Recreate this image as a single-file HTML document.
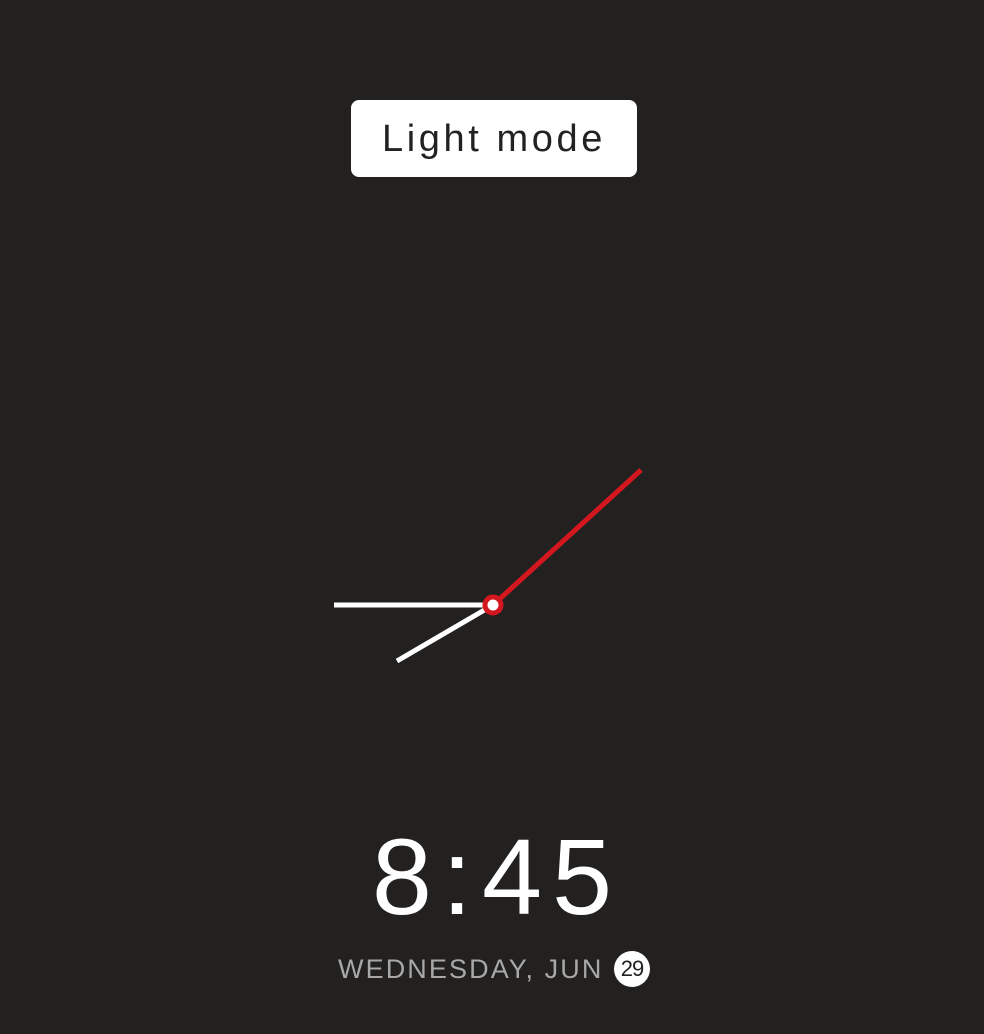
<!DOCTYPE html>
<html><head><style>
html,body{margin:0;padding:0;background:#222120;width:984px;height:1034px;overflow:hidden;font-family:"Liberation Sans",sans-serif}
.btn{position:absolute;left:351px;top:100px;width:286px;height:77px;background:#fff;border-radius:8px;color:#222;font-size:38px;letter-spacing:3.6px;text-align:center;line-height:79px}
.time{position:absolute;left:0;width:984px;top:812px;padding-left:10px;box-sizing:border-box;text-align:center;color:#fff;font-size:108px;line-height:130px;font-weight:normal;letter-spacing:10px}
.date{position:absolute;left:338px;top:953px;color:#a8a8a8;font-size:27px;letter-spacing:2.1px;line-height:32px;white-space:nowrap}
.day{position:absolute;left:614px;top:951px;width:36px;height:36px;border-radius:50%;background:#fff;color:#222;font-size:22px;text-align:center;line-height:36px;letter-spacing:-1px}
</style></head><body>
<div class="btn">Light mode</div>
<svg width="984" height="1034" style="position:absolute;left:0;top:0">
<line x1="493" y1="605" x2="334" y2="605" stroke="#fff" stroke-width="5"/>
<line x1="493" y1="605" x2="397" y2="661" stroke="#fff" stroke-width="5"/>
<line x1="493" y1="605" x2="641" y2="470" stroke="#d4171f" stroke-width="5"/>
<circle cx="493" cy="605" r="8" fill="#fff" stroke="#d4171f" stroke-width="5"/>
</svg>
<div class="time">8:45</div>
<div class="date">WEDNESDAY, JUN</div>
<div class="day">29</div>
</body></html>
